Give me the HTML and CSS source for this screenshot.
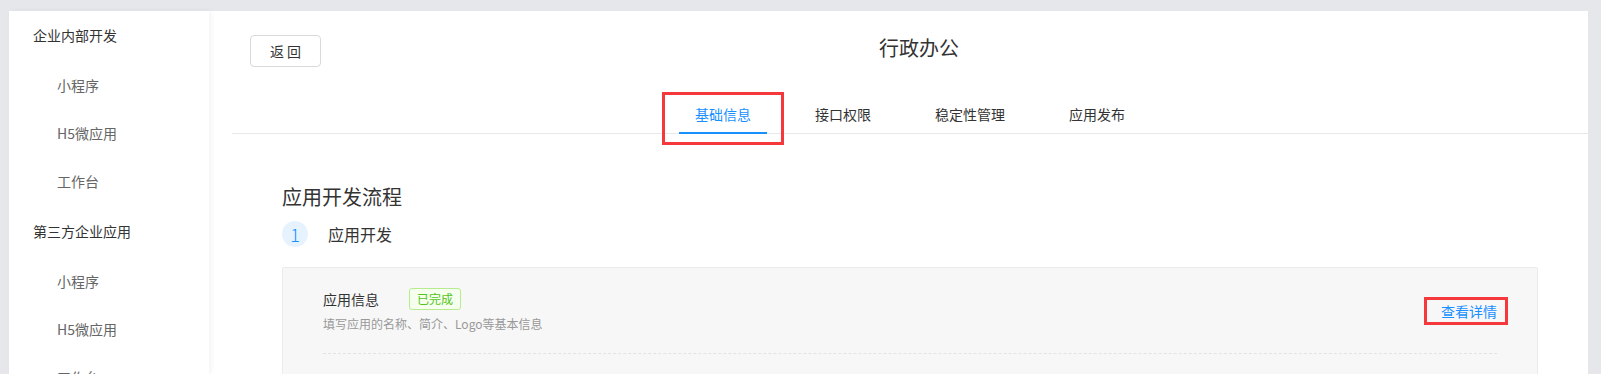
FILE: index.html
```html
<!DOCTYPE html>
<html>
  <head>
    <meta charset="utf-8" />
    <title>行政办公</title>
    <link rel="stylesheet" href="styles.css">
  </head>
  <body>
    <div class="layout">
      <aside class="sidebar">
        <div class="menu">
          <div class="menu-group">企业内部开发</div>
          <a class="menu-item">小程序</a>
          <a class="menu-item">H5微应用</a>
          <a class="menu-item">工作台</a>
          <div class="menu-group">第三方企业应用</div>
          <a class="menu-item">小程序</a>
          <a class="menu-item">H5微应用</a>
          <a class="menu-item">工作台</a>
        </div>
      </aside>
      <main class="panel">
        <header class="panel-head">
          <button class="btn-back">返 回</button>
          <h1 class="app-title">行政办公</h1>
        </header>
        <nav class="tabs">
          <a class="tab active">基础信息<span class="mark"></span></a>
          <a class="tab">接口权限</a>
          <a class="tab">稳定性管理</a>
          <a class="tab">应用发布</a>
        </nav>
        <section class="flow">
          <h2 class="flow-title">应用开发流程</h2>
          <div class="step">
            <span class="step-num">1</span>
            <span class="step-name">应用开发</span>
          </div>
          <div class="card">
            <div class="card-row">
              <div class="card-info">
                <div class="card-name">应用信息 <span class="tag-done">已完成</span></div>
                <div class="card-desc">填写应用的名称、简介、Logo等基本信息</div>
              </div>
              <a class="card-link">查看详情<span class="mark"></span></a>
            </div>
          </div>
        </section>
      </main>
    </div>
  </body>
</html>
```

FILE: styles.css
```css
html, body {
  margin: 0;
  height: 100%;
  overflow: hidden;
}

body {
  background-color: #e6e7eb;
  font-family: "Noto Sans CJK SC", "Liberation Sans", sans-serif;
  font-size: 14px;
  color: #333;
  padding: 11px 13px 0 9px;
  box-sizing: border-box;
}

a {
  text-decoration: none;
  cursor: pointer;
}

.layout {
  display: flex;
  height: 100%;
}

/* sidebar */
.sidebar {
  width: 200px;
  flex: none;
  background-color: #fff;
  box-shadow: 2px 0 6px rgba(0, 0, 0, 0.05);
  position: relative;
  z-index: 1;
}
.menu {
  margin-top: -2px;
}
.menu-group {
  line-height: 52px;
  padding-left: 24px;
  color: #333;
}
.menu-item {
  display: block;
  line-height: 48px;
  padding-left: 48px;
  color: #666;
}

/* main panel */
.panel {
  flex: 1;
  background-color: #fff;
  padding: 24px 0 0 23px;
}

.panel-head {
  display: grid;
  grid-template-columns: 1fr auto 1fr;
  padding-left: 18px;
}
.btn-back {
  justify-self: start;
  width: 71px;
  height: 32px;
  border: 1px solid #d9d9d9;
  border-radius: 4px;
  background: #fff;
  font-family: inherit;
  font-size: 14px;
  color: #333;
  padding: 0;
}
.app-title {
  margin: 0;
  font-size: 20px;
  font-weight: normal;
  line-height: 26px;
  color: #333;
}

.tabs {
  display: flex;
  justify-content: center;
  align-items: flex-start;
  gap: 32px;
  margin-top: 24px;
  border-bottom: 1px solid #e8e8e8;
}
.tab {
  position: relative;
  padding: 12px 16px 7px;
  line-height: 22px;
  color: #333;
  border-bottom: 2px solid transparent;
  margin-bottom: -1px;
}
.tab.active {
  color: #1890ff;
  border-bottom-color: #1890ff;
}
.tab .mark {
  position: absolute;
  top: 1px;
  bottom: -13px;
  left: -17px;
  right: -17px;
  border: 3px solid #f5383b;
}

/* flow */
.flow {
  padding: 49px 50px 0;
}
.flow-title {
  margin: 0;
  font-size: 20px;
  font-weight: normal;
  line-height: 28px;
  color: #333;
}
.step {
  display: flex;
  align-items: center;
  gap: 20px;
  margin-top: 10px;
}
.step-num {
  width: 26px;
  height: 26px;
  border-radius: 50%;
  background-color: #e6f3ff;
  color: #1890ff;
  font-size: 18px;
  font-weight: 300;
  line-height: 26px;
  text-align: center;
}
.step-name {
  font-size: 16px;
  color: #333;
}

.card {
  margin-top: 20px;
  background-color: #f7f7f7;
  border: 1px solid #ebebeb;
  border-radius: 2px;
  padding: 20px 40px 0;
  height: 200px;
}
.card-row {
  display: flex;
  align-items: center;
  justify-content: space-between;
  padding-bottom: 19px;
  border-bottom: 1px dashed #e3e3e3;
}
.card-name {
  display: flex;
  align-items: center;
  gap: 30px;
  line-height: 22px;
  color: #333;
}
.tag-done {
  font-size: 12px;
  line-height: 20px;
  padding: 0 7px;
  border: 1px solid #b7eb8f;
  border-radius: 3px;
  background-color: #f6ffed;
  color: #52c41a;
}
.card-desc {
  margin-top: 4px;
  font-size: 12px;
  line-height: 20px;
  color: #999;
}
.card-link {
  position: relative;
  color: #1890ff;
  line-height: 22px;
}
.card-link .mark {
  position: absolute;
  top: -3px;
  bottom: -3px;
  left: -17px;
  right: -11px;
  border: 3px solid #f5383b;
}
```
